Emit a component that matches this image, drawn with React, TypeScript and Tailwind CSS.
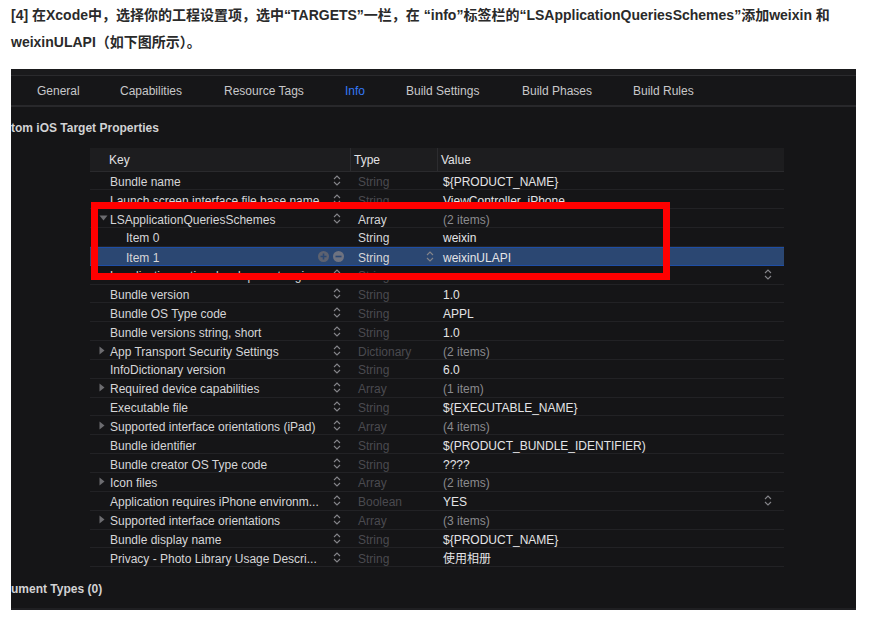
import React from "react";

const Stepper = () => (
  <svg width="8" height="13" viewBox="0 0 8 13">
    <path d="M1 5 L4 2 L7 5" fill="none" stroke="#85858a" strokeWidth="1.1" />
    <path d="M1 8 L4 11 L7 8" fill="none" stroke="#85858a" strokeWidth="1.1" />
  </svg>
);

const TriRight = () => (
  <svg width="6" height="9" viewBox="0 0 6 9">
    <path d="M0.5 0.5 L5.5 4.5 L0.5 8.5 Z" fill="#6c6c70" />
  </svg>
);

const TriDown = () => (
  <svg width="9" height="6" viewBox="0 0 9 6">
    <path d="M0.5 0.5 L8.5 0.5 L4.5 5.5 Z" fill="#6c6c70" />
  </svg>
);

const PlusMinus = () => (
  <div className="absolute right-[7px] top-0 h-full flex items-center gap-[4px]">
    <svg width="11" height="11" viewBox="0 0 11 11">
      <circle cx="5.5" cy="5.5" r="5.5" fill="#5d6270" />
      <path d="M5.5 2.5 V8.5 M2.5 5.5 H8.5" stroke="#2b4873" strokeWidth="1.6" />
    </svg>
    <svg width="11" height="11" viewBox="0 0 11 11">
      <circle cx="5.5" cy="5.5" r="5.5" fill="#6f7380" />
      <path d="M2.5 5.5 H8.5" stroke="#2b4873" strokeWidth="1.6" />
    </svg>
  </div>
);

type Row = {
  k: string;
  t: string;
  v: string;
  tri?: "r" | "d";
  indent?: boolean;
  keyStep?: boolean;
  typeBright?: boolean;
  valDim?: boolean;
  valStep?: boolean;
  sel?: boolean;
};

const rows: Row[] = [
  { k: "Bundle name", t: "String", v: "${PRODUCT_NAME}", keyStep: true },
  { k: "Launch screen interface file base name", t: "String", v: "ViewController_iPhone", keyStep: true },
  { k: "LSApplicationQueriesSchemes", t: "Array", v: "(2 items)", tri: "d", keyStep: true, typeBright: true, valDim: true },
  { k: "Item 0", t: "String", v: "weixin", indent: true, typeBright: true },
  { k: "Item 1", t: "String", v: "weixinULAPI", indent: true, typeBright: true, sel: true },
  { k: "Localization native development region", t: "String", v: "en", keyStep: true, valStep: true },
  { k: "Bundle version", t: "String", v: "1.0", keyStep: true },
  { k: "Bundle OS Type code", t: "String", v: "APPL", keyStep: true },
  { k: "Bundle versions string, short", t: "String", v: "1.0", keyStep: true },
  { k: "App Transport Security Settings", t: "Dictionary", v: "(2 items)", tri: "r", keyStep: true, valDim: true },
  { k: "InfoDictionary version", t: "String", v: "6.0", keyStep: true },
  { k: "Required device capabilities", t: "Array", v: "(1 item)", tri: "r", keyStep: true, valDim: true },
  { k: "Executable file", t: "String", v: "${EXECUTABLE_NAME}", keyStep: true },
  { k: "Supported interface orientations (iPad)", t: "Array", v: "(4 items)", tri: "r", keyStep: true, valDim: true },
  { k: "Bundle identifier", t: "String", v: "$(PRODUCT_BUNDLE_IDENTIFIER)", keyStep: true },
  { k: "Bundle creator OS Type code", t: "String", v: "????", keyStep: true },
  { k: "Icon files", t: "Array", v: "(2 items)", tri: "r", keyStep: true, valDim: true },
  { k: "Application requires iPhone environm...", t: "Boolean", v: "YES", keyStep: true, valStep: true },
  { k: "Supported interface orientations", t: "Array", v: "(3 items)", tri: "r", keyStep: true, valDim: true },
  { k: "Bundle display name", t: "String", v: "${PRODUCT_NAME}", keyStep: true },
  { k: "Privacy - Photo Library Usage Descri...", t: "String", v: "使用相册", keyStep: true },
];

const tabs: { label: string; w: string; active?: boolean }[] = [
  { label: "General", w: "w-[83px]" },
  { label: "Capabilities", w: "w-[104px]" },
  { label: "Resource Tags", w: "w-[121px]" },
  { label: "Info", w: "w-[61px]", active: true },
  { label: "Build Settings", w: "w-[116px]" },
  { label: "Build Phases", w: "w-[111px]" },
  { label: "Build Rules", w: "w-[100px]" },
];

export default function App() {
  return (
    <div
      className="w-[870px] h-[621px] bg-white overflow-hidden"
      style={{ fontFamily: '"Liberation Sans", "Noto Sans CJK SC", sans-serif' }}
    >
      <div className="h-[56px] pl-[11px] pt-[2px] pr-[20px] text-[14px] leading-[27px] font-bold text-[#2a2a2a]">
        [4] 在Xcode中，选择你的工程设置项，选中“TARGETS”一栏，在 “info”标签栏的“LSApplicationQueriesSchemes”添加weixin 和
        weixinULAPI（如下图所示）。
      </div>

      <div className="relative ml-[11px] mt-[13px] w-[845px] h-[541px] bg-[#151517] flex flex-col text-[12px]">
        <div className="h-[7px] bg-[#1a1a1c] border-b border-[#2a2a2d] shrink-0" />
        <div className="h-[31px] shrink-0 flex items-center pl-[26px] bg-[#161618] border-b-2 border-[#28282b]">
          {tabs.map((t) => (
            <div key={t.label} className={`${t.w} shrink-0 ${t.active ? "text-[#3478f6]" : "text-[#c8c8ca]"}`}>
              {t.label}
            </div>
          ))}
        </div>
        <div className="h-[40px] shrink-0 pt-[14px] leading-[14px] font-bold text-[#d2d2d4] whitespace-nowrap">
          tom iOS Target Properties
        </div>

        <div className="mt-[1px] ml-[79px] w-[694px] shrink-0">
          <div className="h-[23.5px] flex items-center bg-[#1d1d1f] border-b border-[#2a2a2d] text-[#e2e2e4] font-medium">
            <div className="w-[261px] pl-[19px] pt-[2px] h-full flex items-center border-r border-[#2c2c2f]">Key</div>
            <div className="w-[87px] pl-[3px] pt-[2px] h-full flex items-center border-r border-[#2c2c2f]">Type</div>
            <div className="flex-1 pl-[3px] pt-[2px] h-full flex items-center">Value</div>
          </div>
          {rows.map((r, i) => (
            <div
              key={i}
              className={`h-[18.85px] flex items-center border-b ${
                r.sel ? "bg-[#2b4772] border-[#1e4ea6] border-t" : "border-[#222225]"
              }`}
            >
              <div className="w-[261px] h-full relative flex items-center">
                {r.tri && (
                  <div className="absolute left-[9px] top-0 h-full flex items-center">
                    {r.tri === "r" ? <TriRight /> : <TriDown />}
                  </div>
                )}
                <div
                  className={`${r.indent ? "pl-[36px]" : "pl-[20px]"} pt-[3px] pr-[24px] whitespace-nowrap overflow-hidden text-[#d6d6d8]`}
                >
                  {r.k}
                </div>
                {r.keyStep && (
                  <div className="absolute right-[10px] top-0 h-full flex items-center">
                    <Stepper />
                  </div>
                )}
                {r.sel && <PlusMinus />}
              </div>
              <div
                className={`w-[87px] h-full relative flex items-center pl-[7px] pt-[3px] ${
                  r.typeBright ? "text-[#d6d6d8]" : "text-[#4a4a4f]"
                }`}
              >
                {r.t}
                {r.sel && (
                  <div className="absolute right-[4px] top-0 h-full flex items-center">
                    <Stepper />
                  </div>
                )}
              </div>
              <div
                className={`flex-1 h-full relative flex items-center pl-[5px] pt-[3px] whitespace-nowrap ${
                  r.valDim ? "text-[#8a8a8e]" : "text-[#e4e4e6]"
                }`}
              >
                {r.v}
                {r.valStep && (
                  <div className="absolute right-[12px] top-0 h-full flex items-center">
                    <Stepper />
                  </div>
                )}
              </div>
            </div>
          ))}
        </div>

        <div className="pt-[15px] leading-[14px] font-bold text-[#d2d2d4] whitespace-nowrap">ument Types (0)</div>
        <div className="flex-1" />
        <div className="h-[2px] bg-[#1f1f22]" />

        <div className="absolute left-[80px] top-[133px] w-[579px] h-[78px] border-[7px] border-[#ff0000]" />
      </div>
    </div>
  );
}
